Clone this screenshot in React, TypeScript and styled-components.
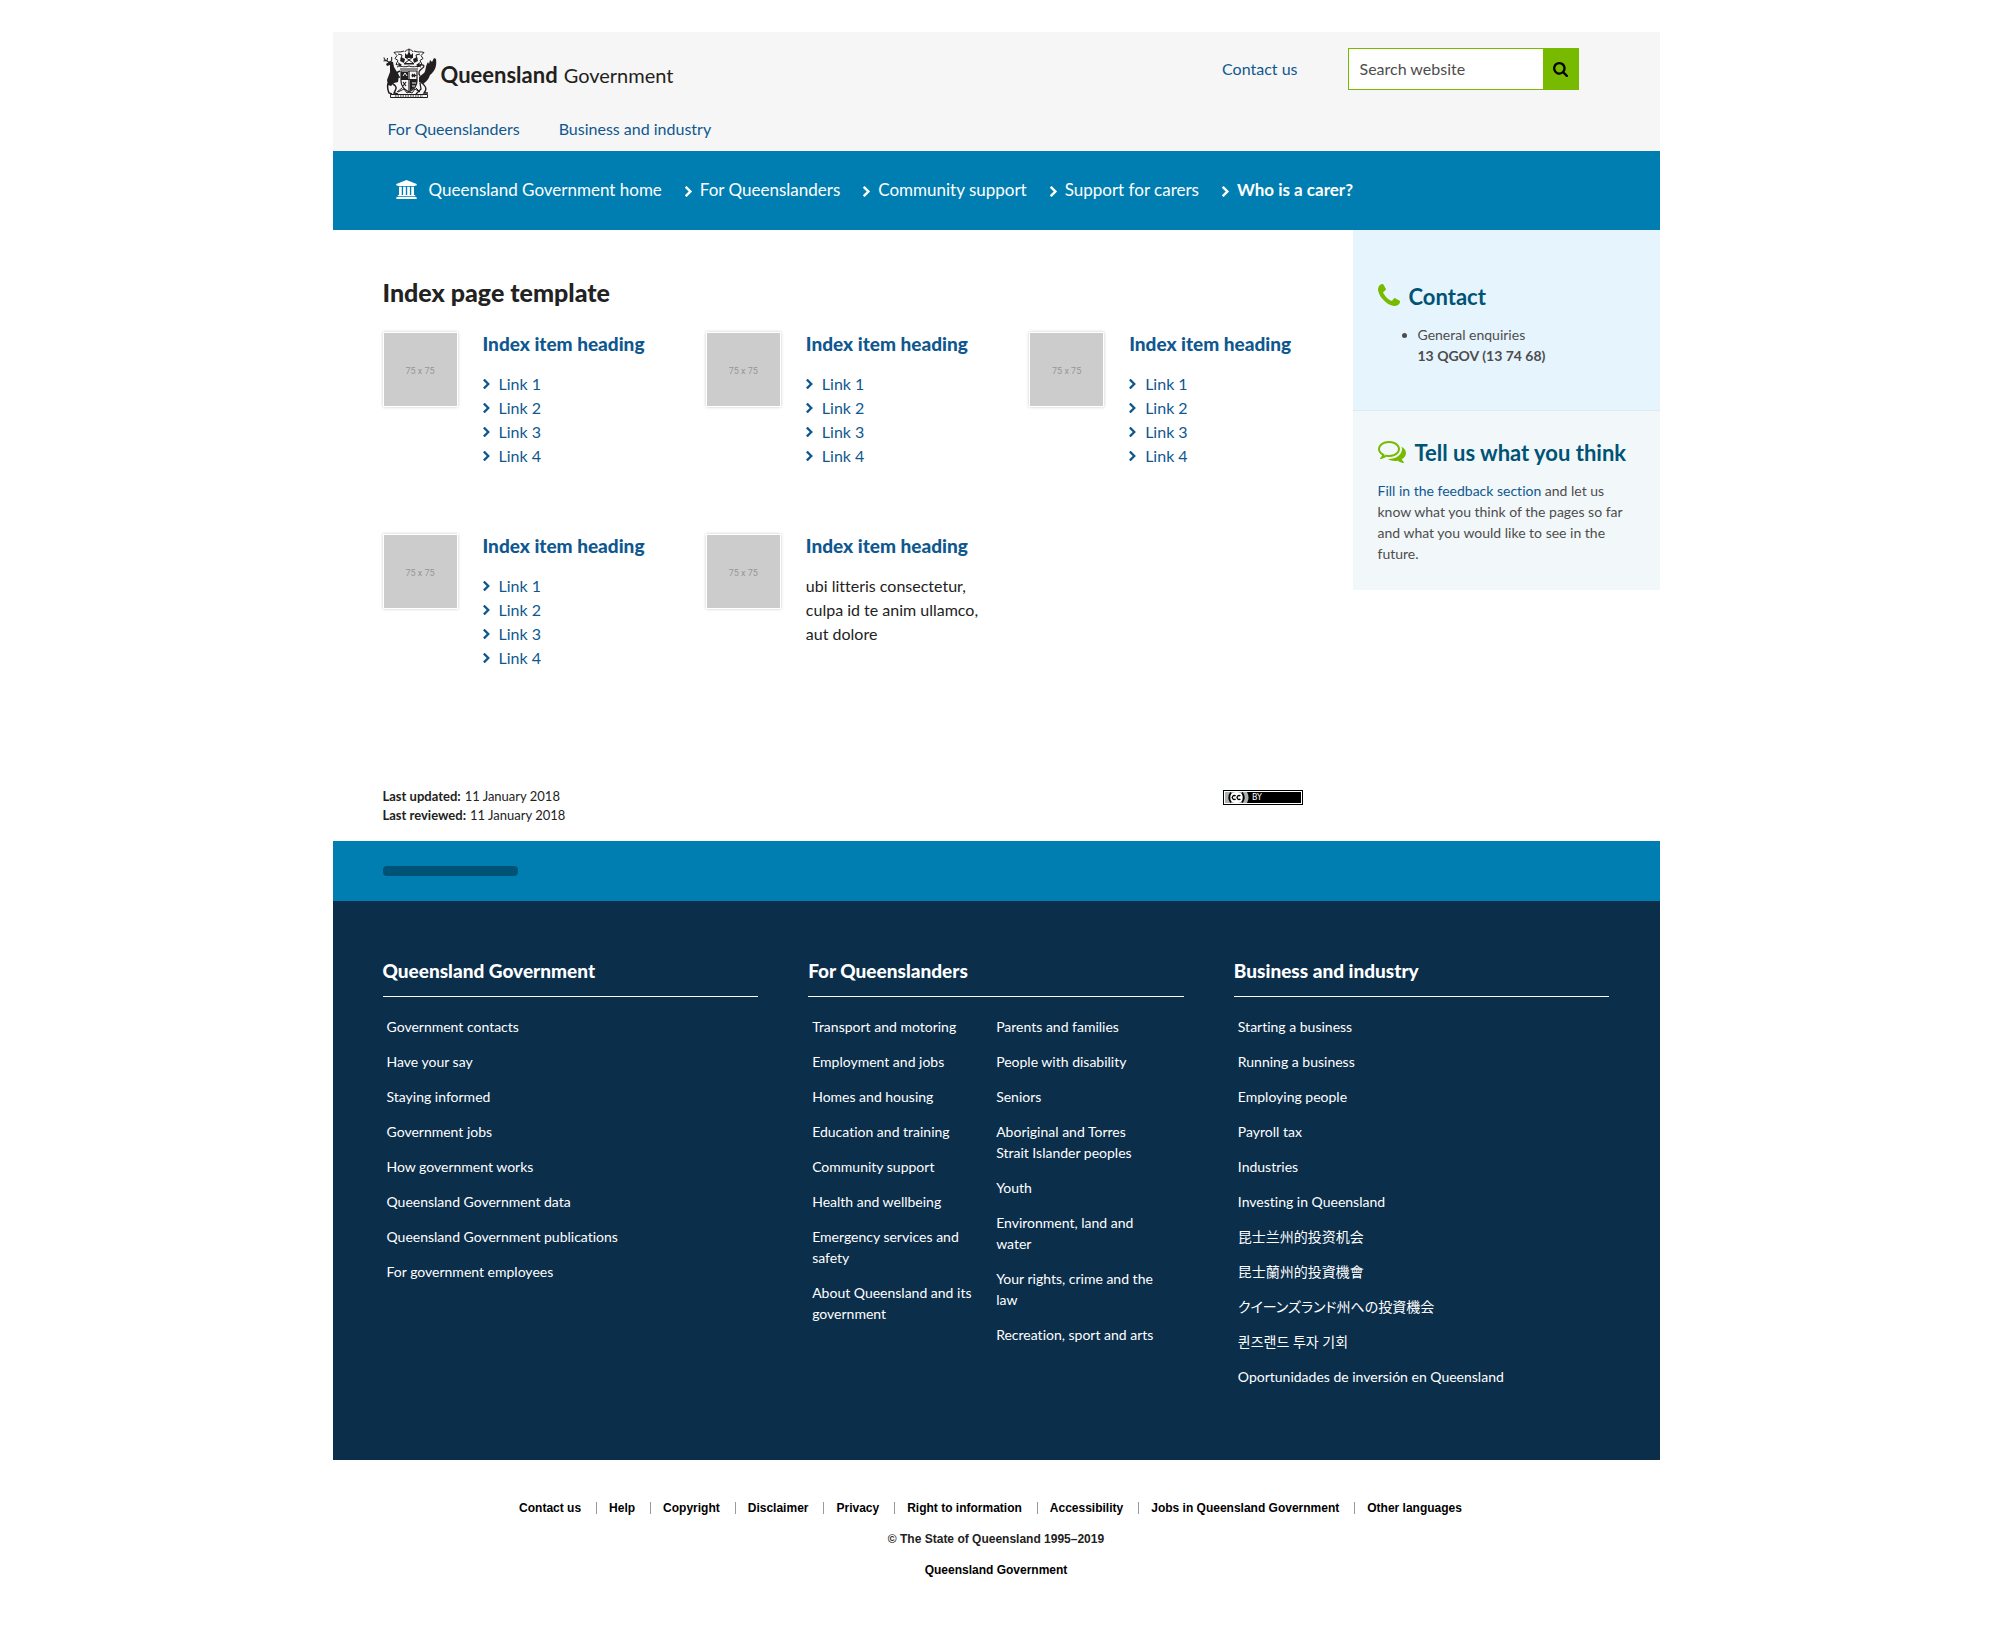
import React from "react";
import styled, { createGlobalStyle, css } from "styled-components";

const GlobalStyle = createGlobalStyle`
  *, *::before, *::after { box-sizing: border-box; }
  body {
    margin: 0;
    background: #fff;
    color: #222;
    font-family: Lato, "Noto Sans CJK SC", sans-serif;
    font-size: 16px;
    font-variant-ligatures: none;
    line-height: 24px;
  }
  h1, h2, h3, p, ul, ol, dl, dd { margin: 0; padding: 0; }
  ul, ol { list-style: none; }
  a { color: #0f588f; text-decoration: none; }
  a:hover { text-decoration: underline; }
`;

const Page = styled.div`
  max-width: 1327px;
  margin: 32px auto 0;
`;

/* ---------- header ---------- */

const Header = styled.header`
  display: flex;
  flex-direction: column;
  gap: 19px;
  padding: 16px 81px 10px 50px;
  background: #f6f6f6;
`;

const HeaderTop = styled.div`
  display: flex;
  justify-content: space-between;
  align-items: flex-start;
`;

const Brand = styled.a`
  display: flex;
  align-items: center;
  gap: 4px;
  color: #231f20;
`;

const BrandName = styled.span`
  display: flex;
  align-items: baseline;
  gap: 6px;
  padding-top: 4px;
  font-size: 20px;
  strong { font-size: 22px; }
`;

const HeaderTools = styled.div`
  display: flex;
  align-items: center;
  gap: 50px;
`;

const SearchForm = styled.form`
  display: flex;
  height: 42px;
`;

const SearchInput = styled.input`
  width: 195px;
  padding: 0 11px;
  border: 1px solid #78ba00;
  border-right: 0;
  border-radius: 0;
  background: #fff;
  font: inherit;
  &::placeholder { color: #4d4d4d; opacity: 1; }
`;

const SearchButton = styled.button`
  display: grid;
  place-items: center;
  width: 36px;
  padding: 0;
  border: 0;
  background: #78ba00;
  color: #000;
`;

const AudienceNav = styled.ul`
  display: flex;
  gap: 39px;
  padding-left: 5px;
`;

const Breadcrumbs = styled.nav`
  padding: 27px 63px 28px;
  background: #007eb1;
  color: #fff;
  font-size: 17px;
  line-height: 24px;
`;

const Crumbs = styled.ol`
  display: flex;
  flex-wrap: wrap;
  gap: 0 23px;
`;

const Crumb = styled.li<{ $home?: boolean }>`
  display: flex;
  align-items: center;
  gap: ${(p) => (p.$home ? "12px" : "8px")};
  a { color: #fff; }
  svg { margin: ${(p) => (p.$home ? "0 0 2px" : "2px 0 0")}; }
`;

/* ---------- body ---------- */

const Body = styled.div`
  display: grid;
  grid-template-columns: minmax(0, 1fr) 307px;
  align-items: start;
`;

const Main = styled.main`
  padding: 47px 50px 16px;
`;

const PageTitle = styled.h1`
  margin-bottom: 25px;
  font-size: 25px;
  font-weight: 900;
  line-height: 30px;
`;

const IndexGrid = styled.ul`
  display: grid;
  grid-template-columns: repeat(3, minmax(0, 1fr));
  gap: 66px 50px;
`;

const IndexItem = styled.li`
  display: grid;
  grid-template-columns: 75px minmax(0, 1fr);
  gap: 25px;
`;

const Thumb = styled.div`
  display: grid;
  place-items: center;
  width: 75px;
  height: 75px;
  padding-top: 2px;
  border: 1px solid #fff;
  background: #ccc;
  box-shadow: 0 0 3px rgba(0, 0, 0, 0.22);
  color: #969696;
  font-family: Roboto, sans-serif;
  font-size: 9px;
  line-height: 12px;
`;

const ItemHeading = styled.h2`
  margin-bottom: 16px;
  font-size: 19px;
  font-weight: 900;
  line-height: 24px;
`;

const ItemLink = styled.a`
  display: flex;
  align-items: center;
  gap: 9px;
`;

const PageMeta = styled.div`
  display: flex;
  justify-content: space-between;
  align-items: flex-start;
  margin-top: 117px;
  font-size: 13px;
  line-height: 19px;
`;

const MetaRow = styled.div`
  display: flex;
  gap: 4px;
  dt { font-weight: 700; }
`;

const LicenceLink = styled.a`
  display: block;
  margin-top: 3px;
  svg { display: block; }
`;

/* ---------- sidebar ---------- */

const Aside = styled.aside`
  color: #4d4d4d;
  font-size: 14px;
  line-height: 21px;
`;

const AsideSection = styled.section<{ $tone: "contact" | "feedback" }>`
  ${(p) =>
    p.$tone === "contact"
      ? css`
          padding: 52px 25px 44px;
          border-bottom: 1px solid #dcebf3;
          background: #e6f4fd;
        `
      : css`
          padding: 27px 25px 26px;
          background: #f2f7fa;
        `}
`;

const AsideHeading = styled.h2`
  display: flex;
  gap: 9px;
  margin-bottom: 12px;
  color: #005375;
  font-size: 22px;
  font-weight: 700;
  line-height: 30px;
  svg { margin-top: 2px; }
`;

const ContactList = styled.ul`
  padding-left: 40px;
  list-style: disc;
`;

/* ---------- footer ---------- */

const ShareStrip = styled.div`
  padding: 25px 50px;
  background: #007eb1;
`;

const ShareBar = styled.div`
  width: 135px;
  height: 10px;
  border-radius: 4px;
  background: #005375;
`;

const SiteMap = styled.nav`
  display: grid;
  grid-template-columns: repeat(3, minmax(0, 1fr));
  gap: 50px;
  padding: 57px 50px 73px;
  background: #0b2e4b;
  color: #fff;
  font-size: 14px;
  line-height: 21px;
  a { color: #fff; }
`;

const SiteMapHeading = styled.h2`
  margin-bottom: 19px;
  padding-bottom: 12px;
  border-bottom: 1px solid #fff;
  font-size: 19px;
  font-weight: 900;
  line-height: 26px;
`;

const SiteMapLists = styled.div<{ $split: boolean }>`
  display: grid;
  grid-template-columns: ${(p) => (p.$split ? "163px 163px" : "1fr")};
  gap: 21px;
  padding-left: 4px;
`;

const SiteMapList = styled.ul`
  display: flex;
  flex-direction: column;
  gap: 14px;
  :lang(zh-Hant) { font-family: Lato, "Noto Sans CJK TC", sans-serif; }
  :lang(ja) {
    font-family: Lato, "Noto Sans CJK JP", sans-serif;
    font-feature-settings: "palt";
  }
  :lang(ko) { font-family: Lato, "Noto Sans CJK KR", sans-serif; }
`;

const Legal = styled.footer`
  display: flex;
  flex-direction: column;
  align-items: center;
  gap: 13px;
  padding: 38px 50px;
  font-family: "Liberation Sans", Arial, sans-serif;
  font-size: 12px;
  font-weight: 700;
  line-height: 18px;
  a { color: #000; }
`;

const LegalLinks = styled.ul`
  display: flex;
  flex-wrap: wrap;
  justify-content: center;
  align-items: center;
  gap: 4px;
  min-height: 19px;
  li {
    padding: 0 11px 0 12px;
    border-left: 1px solid #999;
    line-height: 12px;
  }
  li:first-child { padding-left: 0; border-left: 0; }
`;

/* ---------- drawings ---------- */

const Chevron = ({ height = 10 }: { height?: number }) => (
  <svg width="7" height={height} viewBox="346 58 1036 1580" fill="currentColor" aria-hidden="true">
    <path d="M1363 893l-742 742q-19 19-45 19t-45-19l-166-166q-19-19-19-45t19-45l531-531-531-531q-19-19-19-45t19-45l166-166q19-19 45-19t45 19l742 742q19 19 19 45t-19 45z" />
  </svg>
);

const HomeIcon = () => (
  <svg width="21" height="19" viewBox="0 0 1920 1792" fill="currentColor" aria-hidden="true">
    <path d="M960 0l960 384v128h-128q0 26-20.5 45t-48.5 19h-1526q-28 0-48.5-19t-20.5-45h-128v-128zm-704 640h256v768h128v-768h256v768h128v-768h256v768h128v-768h256v768h59q28 0 48.5 19t20.5 45v64h-1664v-64q0-26 20.5-45t48.5-19h59v-768zm1595 960q28 0 48.5 19t20.5 45v128h-1920v-128q0-26 20.5-45t48.5-19h1782z" />
  </svg>
);

const SearchIcon = () => (
  <svg width="15" height="15" viewBox="64 128 1664 1664" fill="currentColor" aria-hidden="true">
    <path d="M1216 832q0-185-131.5-316.5t-316.5-131.5-316.5 131.5-131.5 316.5 131.5 316.5 316.5 131.5 316.5-131.5 131.5-316.5zm512 832q0 52-38 90t-90 38q-54 0-90-38l-343-342q-179 124-399 124-143 0-273.5-55.5t-225-150-150-225-55.5-273.5 55.5-273.5 150-225 225-150 273.5-55.5 273.5 55.5 225 150 150 225 55.5 273.5q0 220-124 399l343 343q37 37 37 90z" />
  </svg>
);

const PhoneIcon = () => (
  <svg width="22" height="22" viewBox="0 128 1408 1408" fill="#78ba00" aria-hidden="true">
    <path d="M1408 1240q0 27-10 70.5t-21 68.5q-21 50-122 106-94 51-186 51-27 0-53-3.5t-57.5-12.5-47-14.5-55.5-20.5-49-18q-98-35-175-83-127-79-264-216t-216-264q-48-77-83-175-3-9-18-49t-20.5-55.5-14.5-47-12.5-57.5-3.5-53q0-92 51-186 56-101 106-122 25-11 68.5-21t70.5-10q14 0 21 3 18 6 53 76 11 19 30 54t35 63.5 31 53.5q3 4 17.5 25t21.5 35.5 7 28.5q0 20-28.5 50t-62 55-62 53-28.5 46q0 9 5 22.5t8.5 20.5 14 24 11.5 19q76 137 174 235t235 174q2 1 19 11.5t24 14 20.5 8.5 22.5 5q18 0 46-28.5t53-62 55-62 50-28.5q14 0 28.5 7t35.5 21.5 25 17.5q25 15 53.5 31t63.5 35 54 30q70 35 76 53 3 7 3 21z" />
  </svg>
);

const CommentsIcon = () => (
  <svg width="28" height="24" viewBox="0 190 1792 1536" fill="#78ba00" aria-hidden="true">
    <path d="M704 384q-153 0-286 52t-211.5 141-78.5 191q0 82 53 158t149 132l97 56-35 84q34-20 62-39l44-31 53 10q78 14 153 14 153 0 286-52t211.5-141 78.5-191-78.5-191-211.5-141-286-52zm0-128q191 0 353.5 68.5t256.5 186.5 94 257-94 257-256.5 186.5-353.5 68.5q-86 0-176-16-124 88-278 128-36 9-86 16h-3q-11 0-20.5-8t-11.5-21q-1-3-1-6.5t.5-6.5 2-6l2.5-5 3.5-5.5 4-5 4.5-5 4-4.5q5-6 23-25t26-29.5 22.5-29 25-38.5 20.5-44q-124-72-195-177t-71-224q0-139 94-257t256.5-186.5 353.5-68.5zm822 1169q10 24 20.5 44t25 38.5 22.5 29 26 29.5 23 25q1 1 4 4.5t4.5 5 4 5 3.5 5.5l2.5 5 2 6 .5 6.5-1 6.5q-3 14-13 22t-22 7q-50-7-86-16-154-40-278-128-90 16-176 16-271 0-472-132 58 4 88 4 161 0 309-45t264-129q125-92 192-212t67-254q0-77-23-152 129 71 204 178t75 230q0 120-71 224.5t-195 176.5z" />
  </svg>
);

const Crest = () => (
  <svg width="54" height="50" viewBox="0 0 54 50" fill="none" stroke="#231f20" aria-hidden="true">
    {/* crown and mantling */}
    <path strokeWidth="1" d="M22 4 C22 1 30 1 30 4 M26 0.5 V9 M21 3 C16 5 15 3 11 4.5 M31 3 C36 5 37 3 41 4.5 M11 4.5 l3 3 l-2 3 l3 2 l-2 4 l5 1 M41 4.5 l-3 3 l2 3 l-3 2 l2 4 l-5 1 M15 6 l4 1 l-1 4 l3 3 M37 6 l-4 1 l1 4 l-3 3 M22 9 l8 6 M30 9 l-8 6" />
    <path fill="#231f20" stroke="none" d="M22 5 l2 2 2-3 2 3 2-2 v5 h-8z M18 9 l4 2 -1 4 -4-2z M34 9 l-4 2 1 4 4-2z M21 15 h10 v1.6 h-10z M15 14 l4 3 -3 1z M37 14 l-4 3 3 1z" />
    <path strokeWidth="1" d="M14 19 C18 17 20 20 26 18 C32 20 34 17 38 19 M17 21 h18" />
    {/* shield */}
    <path fill="#f6f6f6" strokeWidth="1.2" d="M18 23 H34 V33 C34 39 30 42 26 44 C22 42 18 39 18 33 Z" />
    <path fill="#231f20" stroke="none" d="M18 24 h7 v7 h-7z M27 32 h7 c0 5-3 8-7 11z" />
    <path strokeWidth="1.2" d="M26 23 V44 M18 31.5 H34 M20 34 l3 4 M23 34 l-3 4 M29 26 l3 3 M32 26 l-3 3 M28.5 27.5 h5" />
    <path stroke="#f6f6f6" strokeWidth="1" d="M20 28 l2-3 l2 3 M29 35 h4 M29 38 h3" />
    {/* deer */}
    <path strokeWidth="1.1" d="M6 14 C3 13 1 12 1 9.5 M4 13 l0.5-3 M7 14 C9 13 9 11 8.5 9 M3 12.5 L0.5 13" />
    <path fill="#231f20" stroke="none" d="M3 16 l4-3 3 1 1 5 3 5 2 3 -1 7 -4 1 -3 3 -3-1 -1-5 3-8 0-7 -3 1z" />
    <path strokeWidth="1.5" d="M13 25 L17 23 M12 29 L17 29 M6 34 C3 38 5 42 6 45 L9 46 M10 36 C15 39 13 41 11 45 L15 46" />
    {/* crane */}
    <path fill="#231f20" stroke="none" d="M53 11 C54 18 52 23 47 27 C46 31 43 34 40 36 L36 34 V29 L41 25 C43 23 42 19 45 14 L46 16 L47 12 L49 14 L51 10 Z" />
    <path strokeWidth="1.3" d="M37 28 C33 22 41 21 41 18 C40 16 36 17 34 19 M38 34 C42 38 45 40 41 45 L45 45 M37 35 L38 41 L33 46" />
    {/* supporters' ground and motto scroll */}
    <path strokeWidth="1" d="M15 44 l6-3 3 4 2-1 3 1 3-4 5 3 M19 40 l-5 4 M33 40 l4 4" />
    <path fill="#f6f6f6" strokeWidth="1" d="M7.5 46.5 H44.5 V49.5 H7.5 Z" />
    <path strokeWidth="1" strokeDasharray="1.5 1" d="M12 48 H40" />
  </svg>
);

const LicenceBadge = () => (
  <svg width="80" height="15" viewBox="0 0 80 15" role="img" aria-label="Creative Commons Attribution">
    <rect width="80" height="15" fill="#000" />
    <rect x="1" y="1" width="78" height="13" fill="#fff" />
    <rect x="2" y="2" width="76" height="11" fill="#000" />
    <path d="M2 2 H24 Q27 7.5 24 13 H2 Z" fill="#abb3ac" />
    <ellipse cx="13.5" cy="7.5" rx="7" ry="5.5" fill="#fff" />
    <path d="M8 2.5 Q4.5 7.5 8 12.5 M19 2.5 Q22.5 7.5 19 12.5" fill="none" stroke="#000" strokeWidth="1.8" />
    <path d="M12.6 6 A2 2 0 1 0 12.6 9 M17.4 6 A2 2 0 1 0 17.4 9" fill="none" stroke="#000" strokeWidth="1.4" />
    <text x="29" y="10" fill="#fff" fontFamily="'DejaVu Sans', sans-serif" fontSize="8">BY</text>
  </svg>
);

/* ---------- content ---------- */

const crumbs = ["For Queenslanders", "Community support", "Support for carers"];
const itemLinks = ["Link 1", "Link 2", "Link 3", "Link 4"];
const items: { text?: string }[] = [
  {},
  {},
  {},
  {},
  { text: "ubi litteris consectetur, culpa id te anim ullamco, aut dolore" },
];

type Entry = string | { text: string; lang: string };

const siteMap: { title: string; lists: Entry[][] }[] = [
  {
    title: "Queensland Government",
    lists: [
      [
        "Government contacts",
        "Have your say",
        "Staying informed",
        "Government jobs",
        "How government works",
        "Queensland Government data",
        "Queensland Government publications",
        "For government employees",
      ],
    ],
  },
  {
    title: "For Queenslanders",
    lists: [
      [
        "Transport and motoring",
        "Employment and jobs",
        "Homes and housing",
        "Education and training",
        "Community support",
        "Health and wellbeing",
        "Emergency services and safety",
        "About Queensland and its government",
      ],
      [
        "Parents and families",
        "People with disability",
        "Seniors",
        "Aboriginal and Torres Strait Islander peoples",
        "Youth",
        "Environment, land and water",
        "Your rights, crime and the law",
        "Recreation, sport and arts",
      ],
    ],
  },
  {
    title: "Business and industry",
    lists: [
      [
        "Starting a business",
        "Running a business",
        "Employing people",
        "Payroll tax",
        "Industries",
        "Investing in Queensland",
        { text: "昆士兰州的投资机会", lang: "zh-Hans" },
        { text: "昆士蘭州的投資機會", lang: "zh-Hant" },
        { text: "クイーンズランド州への投資機会", lang: "ja" },
        { text: "퀸즈랜드 투자 기회", lang: "ko" },
        { text: "Oportunidades de inversión en Queensland", lang: "es" },
      ],
    ],
  },
];

const legalLinks = [
  "Contact us",
  "Help",
  "Copyright",
  "Disclaimer",
  "Privacy",
  "Right to information",
  "Accessibility",
  "Jobs in Queensland Government",
  "Other languages",
];

const SiteMapEntry = ({ entry }: { entry: Entry }) =>
  typeof entry === "string" ? (
    <a href="#">{entry}</a>
  ) : (
    <a href="#" lang={entry.lang}>
      {entry.text}
    </a>
  );

export default function App() {
  return (
    <>
      <GlobalStyle />
      <Page>
        <Header>
          <HeaderTop>
            <Brand href="#">
              <Crest />
              <BrandName>
                <strong>Queensland</strong>
                <span>Government</span>
              </BrandName>
            </Brand>
            <HeaderTools>
              <a href="#">Contact us</a>
              <SearchForm role="search" onSubmit={(e) => e.preventDefault()}>
                <SearchInput type="text" placeholder="Search website" aria-label="Search website" />
                <SearchButton type="submit" aria-label="Search">
                  <SearchIcon />
                </SearchButton>
              </SearchForm>
            </HeaderTools>
          </HeaderTop>
          <nav aria-label="Audience">
            <AudienceNav>
              <li><a href="#">For Queenslanders</a></li>
              <li><a href="#">Business and industry</a></li>
            </AudienceNav>
          </nav>
        </Header>

        <Breadcrumbs aria-label="Breadcrumb">
          <Crumbs>
            <Crumb $home>
              <HomeIcon />
              <a href="#">Queensland Government home</a>
            </Crumb>
            {crumbs.map((c) => (
              <Crumb key={c}>
                <Chevron height={11} />
                <a href="#">{c}</a>
              </Crumb>
            ))}
            <Crumb aria-current="page">
              <Chevron height={11} />
              <strong>Who is a carer?</strong>
            </Crumb>
          </Crumbs>
        </Breadcrumbs>

        <Body>
          <Main>
            <PageTitle>Index page template</PageTitle>
            <IndexGrid>
              {items.map((item, i) => (
                <IndexItem key={i}>
                  <Thumb>75 x 75</Thumb>
                  <div>
                    <ItemHeading><a href="#">Index item heading</a></ItemHeading>
                    {item.text ? (
                      <p>{item.text}</p>
                    ) : (
                      <ul>
                        {itemLinks.map((l) => (
                          <li key={l}>
                            <ItemLink href="#">
                              <Chevron />
                              {l}
                            </ItemLink>
                          </li>
                        ))}
                      </ul>
                    )}
                  </div>
                </IndexItem>
              ))}
            </IndexGrid>
            <PageMeta>
              <dl>
                <MetaRow><dt>Last updated:</dt><dd>11 January 2018</dd></MetaRow>
                <MetaRow><dt>Last reviewed:</dt><dd>11 January 2018</dd></MetaRow>
              </dl>
              <LicenceLink href="#"><LicenceBadge /></LicenceLink>
            </PageMeta>
          </Main>

          <Aside>
            <AsideSection $tone="contact">
              <AsideHeading><PhoneIcon />Contact</AsideHeading>
              <ContactList>
                <li>
                  General enquiries<br />
                  <strong>13 QGOV (13 74 68)</strong>
                </li>
              </ContactList>
            </AsideSection>
            <AsideSection $tone="feedback">
              <AsideHeading><CommentsIcon />Tell us what you think</AsideHeading>
              <p>
                <a href="#">Fill in the feedback section</a> and let us know what you think of
                the pages so far and what you would like to see in the future.
              </p>
            </AsideSection>
          </Aside>
        </Body>

        <ShareStrip><ShareBar /></ShareStrip>

        <SiteMap aria-label="Site map">
          {siteMap.map((col) => (
            <section key={col.title}>
              <SiteMapHeading><a href="#">{col.title}</a></SiteMapHeading>
              <SiteMapLists $split={col.lists.length > 1}>
                {col.lists.map((list, i) => (
                  <SiteMapList key={i}>
                    {list.map((entry, j) => (
                      <li key={j}><SiteMapEntry entry={entry} /></li>
                    ))}
                  </SiteMapList>
                ))}
              </SiteMapLists>
            </section>
          ))}
        </SiteMap>

        <Legal>
          <LegalLinks>
            {legalLinks.map((l) => (
              <li key={l}><a href="#">{l}</a></li>
            ))}
          </LegalLinks>
          <p>© The State of Queensland 1995–2019</p>
          <p><a href="#">Queensland Government</a></p>
        </Legal>
      </Page>
    </>
  );
}
